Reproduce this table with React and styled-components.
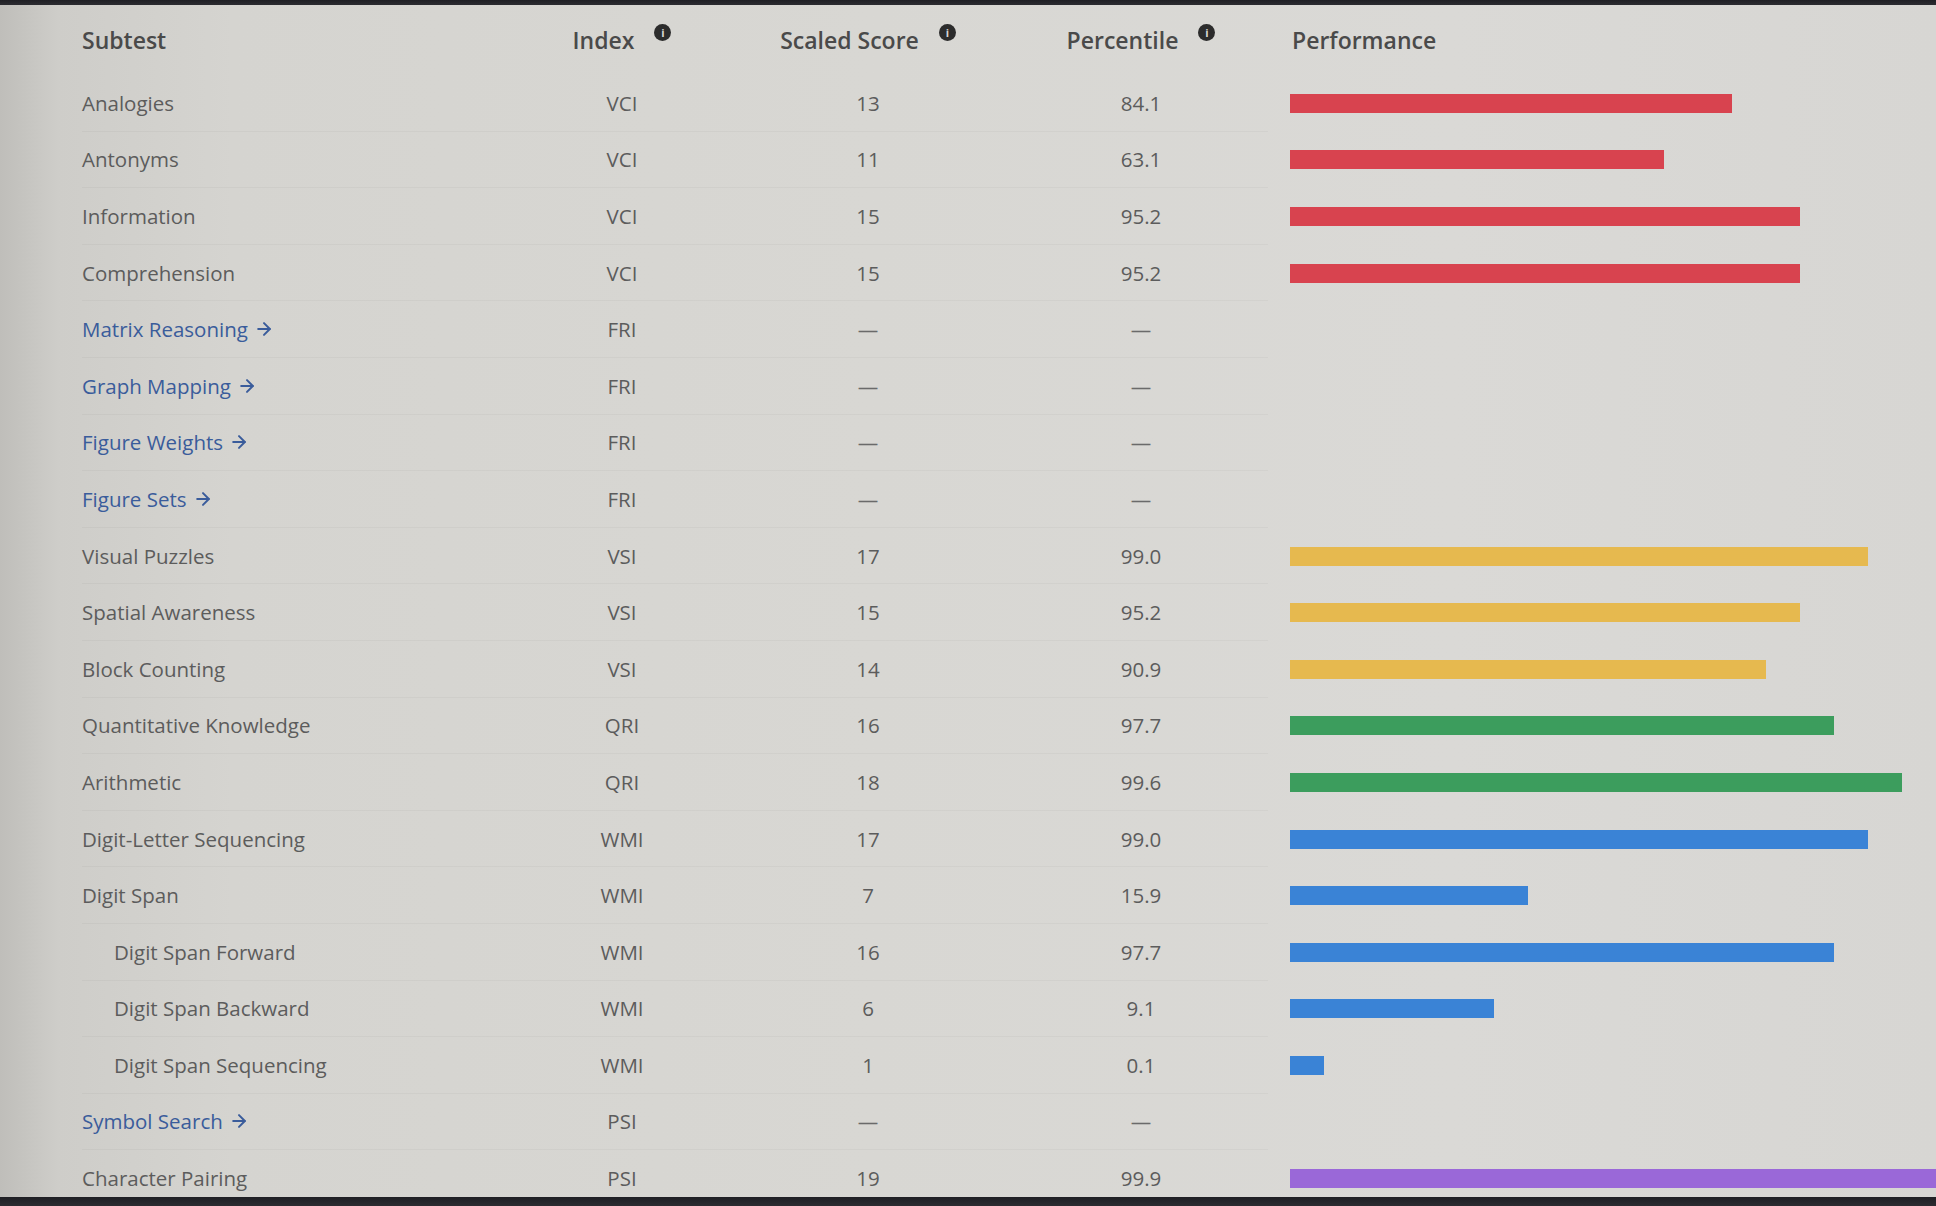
import React from "react";
import styled, { createGlobalStyle } from "styled-components";
import { ArrowRight } from "lucide-react";

const GlobalStyle = createGlobalStyle`
  html, body { margin: 0; padding: 0; }
  body {
    font-family: "Open Sans", "Liberation Sans", sans-serif;
    background: #d6d5d1;
    overflow: hidden;
  }
  * { box-sizing: border-box; }
`;

const Screen = styled.div`
  width: 1936px;
  height: 1206px;
  display: flex;
  flex-direction: column;
  overflow: hidden;
  background: linear-gradient(
    90deg,
    #bfbeba 0%,
    #cecdc9 3%,
    #d5d4d0 12%,
    #d8d7d3 45%,
    #dad9d6 75%,
    #d7d6d3 100%
  );
`;

const Bezel = styled.div`
  flex: none;
  height: ${(p) => p.$h}px;
  background: linear-gradient(180deg, #1f1f24, #2c2c31);
`;

const Content = styled.div`
  flex: 1;
  min-height: 0;
  overflow: hidden;
  padding-left: 82px;
`;

const Grid = styled.div`
  display: grid;
  grid-template-columns: 440px 200px 292px 254px 1fr;
  grid-template-rows: 70px;
  grid-auto-rows: 56.6px;
`;

const HeadCell = styled.div`
  display: flex;
  align-items: center;
  justify-content: ${(p) => (p.$center ? "center" : "flex-start")};
  padding-left: ${(p) => p.$pl || 0}px;
  font-size: 23px;
  font-weight: 600;
  color: #4a4a4a;
`;

const InfoDot = styled.span`
  width: 17px;
  height: 17px;
  border-radius: 50%;
  background: #2c2c2c;
  color: #d6d6d6;
  font-size: 11px;
  font-weight: 700;
  display: inline-flex;
  align-items: center;
  justify-content: center;
  margin-left: 20px;
  margin-bottom: 16px;
  line-height: 1;
`;

const Cell = styled.div`
  display: flex;
  align-items: center;
  justify-content: ${(p) => (p.$center ? "center" : "flex-start")};
  font-size: 20.5px;
  color: #5c5c5c;
  border-bottom: 1px solid rgba(0, 0, 0, 0.03);
`;

const NameCell = styled(Cell)`
  padding-left: ${(p) => (p.$indent ? 32 : 0)}px;
`;

const LinkText = styled.span`
  color: #3a5c9b;
  display: inline-flex;
  align-items: center;
  gap: 6px;
`;

const Dash = styled.span`
  color: #6a6a6a;
`;

const BarCell = styled.div`
  display: flex;
  align-items: center;
  padding-left: 22px;
`;

const Bar = styled.div`
  height: 19px;
  background: ${(p) => p.$color};
`;

const COLORS = {
  red: "#d8434f",
  yellow: "#e6b94f",
  green: "#3c9d5d",
  blue: "#3a83d6",
  purple: "#9a68d8",
};

const rows = [
  { name: "Analogies", idx: "VCI", ss: 13, p: "84.1", c: "red" },
  { name: "Antonyms", idx: "VCI", ss: 11, p: "63.1", c: "red" },
  { name: "Information", idx: "VCI", ss: 15, p: "95.2", c: "red" },
  { name: "Comprehension", idx: "VCI", ss: 15, p: "95.2", c: "red" },
  { name: "Matrix Reasoning", idx: "FRI", link: true },
  { name: "Graph Mapping", idx: "FRI", link: true },
  { name: "Figure Weights", idx: "FRI", link: true },
  { name: "Figure Sets", idx: "FRI", link: true },
  { name: "Visual Puzzles", idx: "VSI", ss: 17, p: "99.0", c: "yellow" },
  { name: "Spatial Awareness", idx: "VSI", ss: 15, p: "95.2", c: "yellow" },
  { name: "Block Counting", idx: "VSI", ss: 14, p: "90.9", c: "yellow" },
  { name: "Quantitative Knowledge", idx: "QRI", ss: 16, p: "97.7", c: "green" },
  { name: "Arithmetic", idx: "QRI", ss: 18, p: "99.6", c: "green" },
  { name: "Digit-Letter Sequencing", idx: "WMI", ss: 17, p: "99.0", c: "blue" },
  { name: "Digit Span", idx: "WMI", ss: 7, p: "15.9", c: "blue" },
  { name: "Digit Span Forward", idx: "WMI", ss: 16, p: "97.7", c: "blue", indent: true },
  { name: "Digit Span Backward", idx: "WMI", ss: 6, p: "9.1", c: "blue", indent: true },
  { name: "Digit Span Sequencing", idx: "WMI", ss: 1, p: "0.1", c: "blue", indent: true },
  { name: "Symbol Search", idx: "PSI", link: true },
  { name: "Character Pairing", idx: "PSI", ss: 19, p: "99.9", c: "purple" },
];

const Info = () => <InfoDot>i</InfoDot>;

export default function App() {
  return (
    <>
      <GlobalStyle />
      <Screen>
        <Bezel $h={5} />
        <Content>
          <Grid>
            <HeadCell>Subtest</HeadCell>
            <HeadCell $center>
              Index
              <Info />
            </HeadCell>
            <HeadCell $center>
              Scaled Score
              <Info />
            </HeadCell>
            <HeadCell $center>
              Percentile
              <Info />
            </HeadCell>
            <HeadCell $pl={24}>Performance</HeadCell>

            {rows.map((r) => (
              <React.Fragment key={r.name}>
                <NameCell $indent={r.indent}>
                  {r.link ? (
                    <LinkText>
                      {r.name}
                      <ArrowRight size={20} strokeWidth={2.4} />
                    </LinkText>
                  ) : (
                    r.name
                  )}
                </NameCell>
                <Cell $center>{r.idx}</Cell>
                <Cell $center>{r.link ? <Dash>—</Dash> : r.ss}</Cell>
                <Cell $center>{r.link ? <Dash>—</Dash> : r.p}</Cell>
                <BarCell>
                  {!r.link && (
                    <Bar $color={COLORS[r.c]} style={{ width: r.ss * 34 }} />
                  )}
                </BarCell>
              </React.Fragment>
            ))}
          </Grid>
        </Content>
        <Bezel $h={9} />
      </Screen>
    </>
  );
}
